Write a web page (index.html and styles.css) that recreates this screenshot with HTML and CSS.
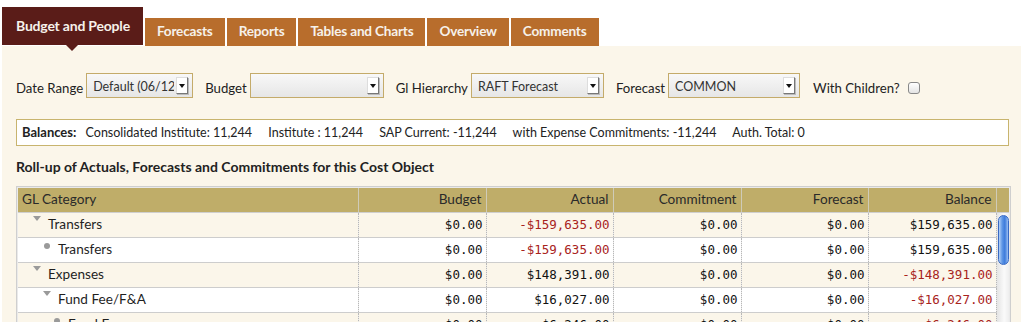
FILE: index.html
```html
<!DOCTYPE html>
<html lang="en">
<head>
<meta charset="UTF-8">
<title>Budget and People</title>
<link rel="stylesheet" href="styles.css">
</head>
<body>
<div class="tabs">
    <div class="tab active">Budget and People</div>
    <div class="tab">Forecasts</div>
    <div class="tab">Reports</div>
    <div class="tab">Tables and Charts</div>
    <div class="tab">Overview</div>
    <div class="tab">Comments</div>
</div>

<div class="panel">
    <div class="filters">
        <label class="filter-label">Date Range</label>
        <div class="select sel-date"><span class="select-text">Default (06/12/2014 - 06/11/2015)</span><span class="select-btn"></span></div>
        <label class="filter-label">Budget</label>
        <div class="select sel-budget"><span class="select-text"></span><span class="select-btn"></span></div>
        <label class="filter-label">Gl Hierarchy</label>
        <div class="select sel-gl"><span class="select-text">RAFT Forecast</span><span class="select-btn"></span></div>
        <label class="filter-label">Forecast</label>
        <div class="select sel-forecast"><span class="select-text">COMMON</span><span class="select-btn"></span></div>
        <label class="filter-label children">With Children?</label>
        <span class="checkbox"></span>
    </div>

    <div class="balances">
        <b>Balances:</b>
        <span>Consolidated Institute: 11,244</span>
        <span>Institute : 11,244</span>
        <span>SAP Current: -11,244</span>
        <span>with Expense Commitments: -11,244</span>
        <span>Auth. Total: 0</span>
    </div>

    <h3 class="rollup-title">Roll-up of Actuals, Forecasts and Commitments for this Cost Object</h3>

    <div class="grid">
        <table class="grid-head">
            <colgroup>
                <col class="w-cat"><col class="w-a"><col class="w-b"><col class="w-a"><col class="w-b"><col class="w-a"><col class="w-scroll">
            </colgroup>
            <tr>
                <th class="cat">GL Category</th>
                <th>Budget</th>
                <th>Actual</th>
                <th>Commitment</th>
                <th>Forecast</th>
                <th>Balance</th>
                <th class="scroll-head"></th>
            </tr>
        </table>
        <div class="grid-body">
            <table class="grid-rows">
                <colgroup>
                    <col class="w-cat"><col class="w-a"><col class="w-b"><col class="w-a"><col class="w-b"><col class="w-a">
                </colgroup>
                <tr class="odd">
                    <td class="cat lvl0"><span class="toggle"></span>Transfers</td>
                    <td class="num">$0.00</td>
                    <td class="num neg">-$159,635.00</td>
                    <td class="num">$0.00</td>
                    <td class="num">$0.00</td>
                    <td class="num">$159,635.00</td>
                </tr>
                <tr>
                    <td class="cat lvl1"><span class="leaf"></span>Transfers</td>
                    <td class="num">$0.00</td>
                    <td class="num neg">-$159,635.00</td>
                    <td class="num">$0.00</td>
                    <td class="num">$0.00</td>
                    <td class="num">$159,635.00</td>
                </tr>
                <tr class="odd">
                    <td class="cat lvl0"><span class="toggle"></span>Expenses</td>
                    <td class="num">$0.00</td>
                    <td class="num">$148,391.00</td>
                    <td class="num">$0.00</td>
                    <td class="num">$0.00</td>
                    <td class="num neg">-$148,391.00</td>
                </tr>
                <tr>
                    <td class="cat lvl1"><span class="toggle"></span>Fund Fee/F&amp;A</td>
                    <td class="num">$0.00</td>
                    <td class="num">$16,027.00</td>
                    <td class="num">$0.00</td>
                    <td class="num">$0.00</td>
                    <td class="num neg">-$16,027.00</td>
                </tr>
                <tr class="odd">
                    <td class="cat lvl2"><span class="leaf"></span>Fund Fee</td>
                    <td class="num">$0.00</td>
                    <td class="num">$6,246.00</td>
                    <td class="num">$0.00</td>
                    <td class="num">$0.00</td>
                    <td class="num neg">-$6,246.00</td>
                </tr>
                <tr>
                    <td class="cat lvl2"><span class="leaf"></span>F&amp;A</td>
                    <td class="num">$0.00</td>
                    <td class="num">$9,781.00</td>
                    <td class="num">$0.00</td>
                    <td class="num">$0.00</td>
                    <td class="num neg">-$9,781.00</td>
                </tr>
            </table>
            <div class="scrollbar"><div class="thumb"></div></div>
        </div>
    </div>
</div>
</body>
</html>
```

FILE: styles.css
```css
body {
    margin: 0;
    font-family: Lato, "Open Sans", sans-serif;
    color: #222;
    background: #fff;
}

/* Tabs */
.tabs {
    display: flex;
    align-items: flex-end;
    gap: 2px;
    padding: 7px 0 0 2px;
    height: 39px;
}

.tab {
    background-color: #b86d2c;
    color: #f6f1ea;
    font-weight: bold;
    font-size: 13.6px;
    height: 28px;
    line-height: 27px;
    padding: 0 12px;
    letter-spacing: -0.2px;
}

.tab.active {
    position: relative;
    background-color: #5a1c18;
    height: 38px;
    line-height: 38px;
    padding: 0 13px 0 14px;
    align-self: flex-start;
    font-size: 14px;
}

.tab.active::after {
    content: "";
    position: absolute;
    left: 64px;
    bottom: -6px;
    border-left: 6px solid transparent;
    border-right: 6px solid transparent;
    border-top: 6px solid #5a1c18;
}

/* Panel */
.panel {
    background-color: #fbf6ea;
    margin-left: 2px;
    padding: 27px 11px 20px 14px;
    min-height: 300px;
}

.filters {
    display: flex;
    align-items: center;
    font-size: 13.2px;
    height: 25px;
}

.filter-label {
    margin-right: 3px;
    padding-top: 5px;
}

.select {
    display: flex;
    align-items: center;
    height: 23px;
    border: 1px solid #c4ab6a;
    background: linear-gradient(#f8f8f8, #e6e6e6);
    margin-right: 12px;
    font-size: 12.5px;
    color: #333;
}

.select-text {
    flex: 1;
    overflow: hidden;
    white-space: nowrap;
    padding-left: 6px;
    padding-top: 1px;
}

.select-btn {
    position: relative;
    width: 10px;
    height: 15px;
    margin: 0 4px 0 2px;
    background: #fff;
    border: 1px solid #ddd;
    border-right-color: #777;
    border-bottom-color: #777;
    box-shadow: 1px 1px 0 #bbb;
}

.select-btn::after {
    content: "";
    position: absolute;
    left: 2px;
    top: 6px;
    border-left: 3px solid transparent;
    border-right: 3px solid transparent;
    border-top: 4px solid #111;
}

.sel-date { width: 105px; }
.sel-budget { width: 132px; }
.sel-gl { width: 131px; }
.sel-forecast { width: 130px; }

.children {
    margin-left: 1px;
    margin-right: 8px;
}

.checkbox {
    width: 10px;
    height: 10px;
    border: 1px solid #888;
    border-radius: 3px;
    background: linear-gradient(#fff, #e4e4e4);
    margin-top: 4px;
}

/* Balances */
.balances {
    margin-top: 21px;
    background: #fff;
    border: 1px solid #c8b46e;
    height: 25px;
    line-height: 25px;
    font-size: 12.5px;
    padding-left: 5px;
    width: 986px;
    color: #222;
}

.balances b {
    font-size: 13px;
    margin-right: 6px;
}

.balances span {
    margin-right: 13px;
}

.rollup-title {
    margin: 12px 0 0 0;
    font-size: 14px;
    font-weight: bold;
    height: 28px;
    line-height: 17px;
}

/* Grid */
.grid {
    width: 991px;
    border: 1px solid #cfcfcf;
    padding: 1px;
    background: #eaeaea;
}

.grid table {
    border-collapse: collapse;
    table-layout: fixed;
    font-size: 13.6px;
}

.w-cat { width: 340px; }
.w-a { width: 128px; }
.w-b { width: 127px; }
.w-scroll { width: 13px; }

.grid-head {
    width: 991px;
}

.grid-head th {
    background-color: #bfad69;
    font-weight: normal;
    height: 22px;
    padding: 0 4px 2px 4px;
    text-align: right;
    border-right: 1px solid #cfcbb8;
    border-bottom: 1px solid #cfcfcf;
    color: #2a2a2a;
}

.grid-head th.cat {
    text-align: left;
}

.grid-head th.scroll-head {
    border-right: none;
    padding: 0;
}

.grid-body {
    display: flex;
}

.grid-rows {
    width: 978px;
}

.grid-rows td {
    height: 22px;
    padding: 0 0 2px 0;
    border-right: 1px dotted #b8b8b8;
    border-bottom: 1px solid #cdcdcd;
    background: #fff;
    white-space: nowrap;
    overflow: hidden;
}

.grid-rows tr.odd td {
    background: #fbf6ea;
}

.grid-rows td.num {
    text-align: right;
    padding-right: 3px;
    font-family: "DejaVu Sans Mono", monospace;
    font-size: 12.5px;
    color: #111;
}

.grid-rows td.neg {
    color: #a8231c;
}

.grid-rows td.cat {
    color: #1f1f1f;
}

.grid-rows td.lvl0 { padding-left: 14px; }
.grid-rows td.lvl1 { padding-left: 24px; }
.grid-rows td.lvl2 { padding-left: 34px; }

.toggle,
.leaf {
    display: inline-block;
    position: relative;
    width: 10px;
    height: 10px;
    margin-right: 6px;
    vertical-align: 1px;
}

.toggle::after {
    content: "";
    position: absolute;
    left: 1px;
    top: -2px;
    border-left: 4px solid transparent;
    border-right: 4px solid transparent;
    border-top: 5px solid #9a9a9a;
}

.leaf::after {
    content: "";
    position: absolute;
    left: 2px;
    top: 0;
    width: 6px;
    height: 6px;
    border-radius: 50%;
    background: #9a9a9a;
}

.scrollbar {
    width: 13px;
    background: linear-gradient(to right, #e4e4e4, #fafafa 60%, #eee);
    padding-top: 2px;
}

.thumb {
    width: 9px;
    height: 48px;
    margin-left: 1px;
    border: 1px solid #3769c4;
    border-radius: 6px;
    background: linear-gradient(to right, #b7d3f7, #5f97e6 35%, #3d7bdb 65%, #9cc0f2);
}
```
